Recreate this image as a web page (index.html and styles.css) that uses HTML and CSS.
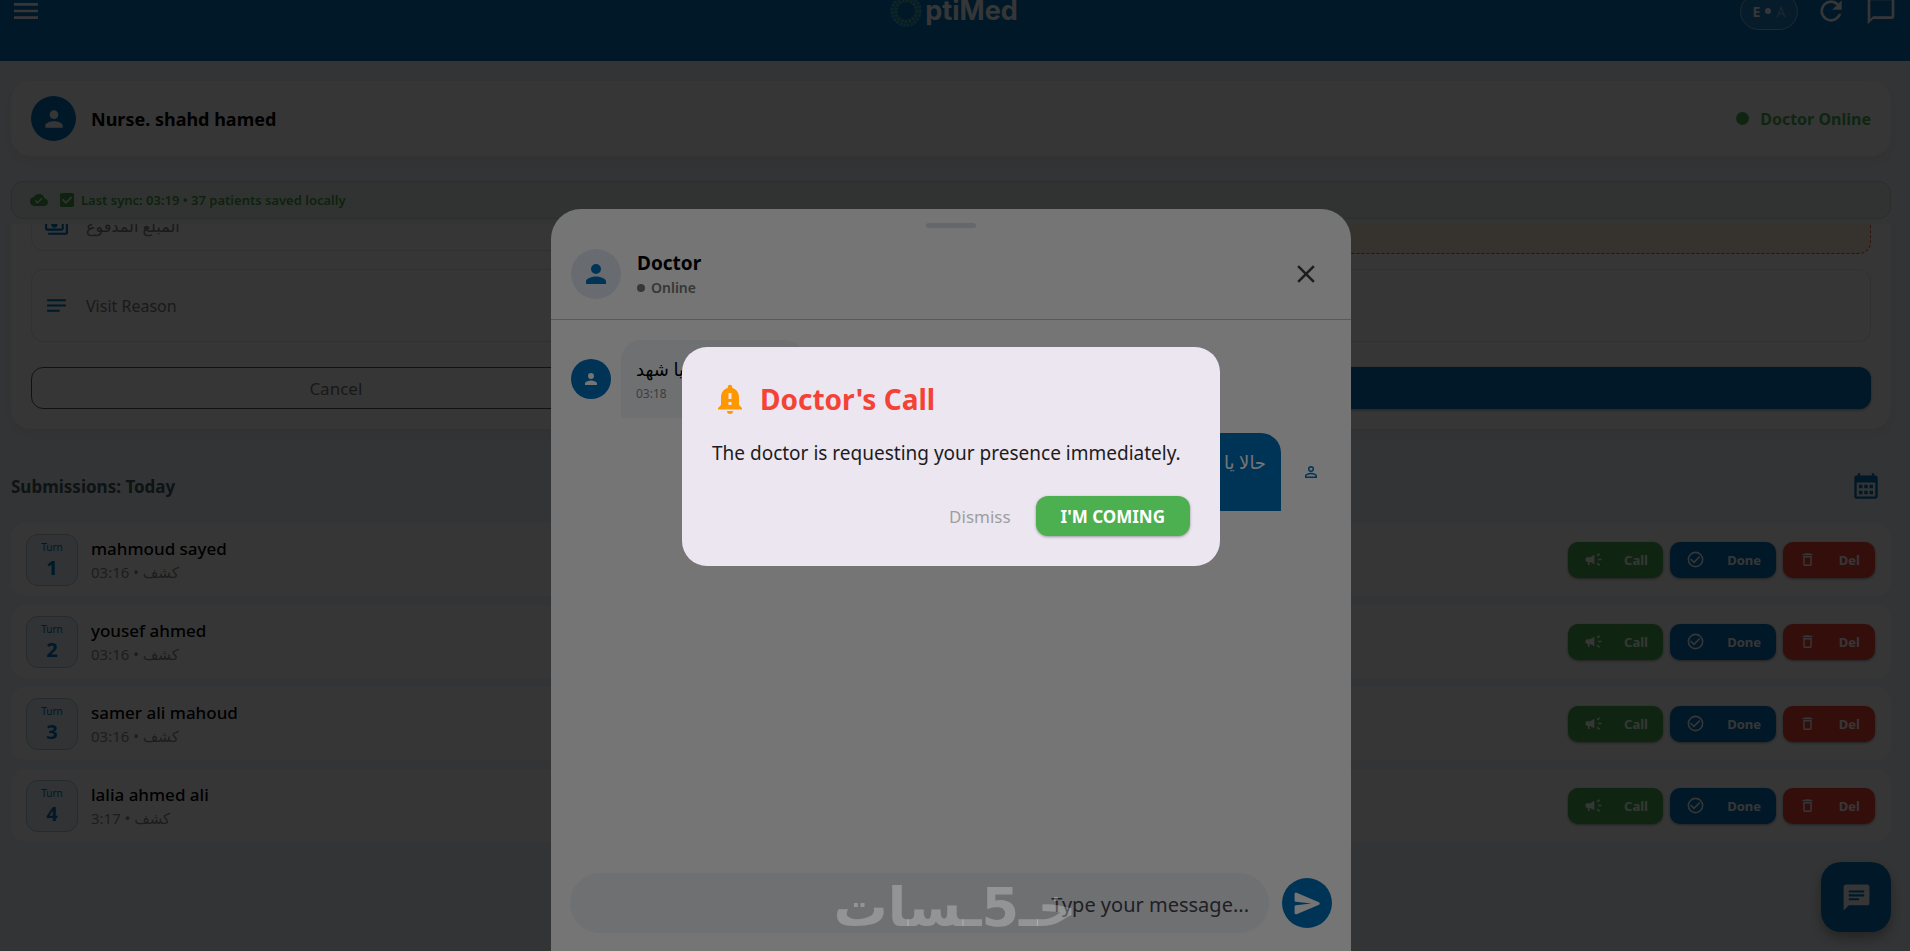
FILE: index.html
```html
<!DOCTYPE html>
<html lang="en">
<head>
    <meta charset="UTF-8">
    <meta name="viewport" content="width=device-width, initial-scale=1.0">
    <title>OptiMed</title>
    <link rel="stylesheet" href="styles.css">
</head>
<body>
    <!-- Icon set -->
    <svg class="sprite" aria-hidden="true">
        <symbol id="i-menu" viewBox="0 0 24 24"><path d="M3 18h18v-2H3v2zm0-5h18v-2H3v2zm0-7v2h18V6H3z"/></symbol>
        <symbol id="i-refresh" viewBox="0 0 24 24"><path d="M17.65 6.35A7.96 7.96 0 0 0 12 4a8 8 0 1 0 7.73 10h-2.08A6 6 0 1 1 12 6c1.66 0 3.14.69 4.22 1.78L13 11h7V4l-2.35 2.35z"/></symbol>
        <symbol id="i-bubble" viewBox="0 0 24 24"><path d="M20 2H4a2 2 0 0 0-2 2v18l4-4h14a2 2 0 0 0 2-2V4a2 2 0 0 0-2-2zm0 14H6l-2 2V4h16v12z"/></symbol>
        <symbol id="i-person" viewBox="0 0 24 24"><path d="M12 12a4 4 0 1 0 0-8 4 4 0 0 0 0 8zm0 2c-2.67 0-8 1.34-8 4v2h16v-2c0-2.66-5.33-4-8-4z"/></symbol>
        <symbol id="i-person-outline" viewBox="0 0 24 24"><path d="M12 5.9a2.1 2.1 0 1 1 0 4.2 2.1 2.1 0 0 1 0-4.2m0 9c2.97 0 6.1 1.46 6.1 2.1v1.1H5.9V17c0-.64 3.13-2.1 6.1-2.1M12 4a4 4 0 1 0 0 8 4 4 0 0 0 0-8zm0 9c-2.67 0-8 1.34-8 4v3h16v-3c0-2.66-5.33-4-8-4z"/></symbol>
        <symbol id="i-cloud" viewBox="0 0 24 24"><path d="M19.35 10.04A7.49 7.49 0 0 0 12 4C9.11 4 6.6 5.64 5.35 8.04A5.994 5.994 0 0 0 0 14c0 3.31 2.69 6 6 6h13c2.76 0 5-2.24 5-5 0-2.64-2.05-4.78-4.65-4.96zM10 17l-3.5-3.5 1.41-1.41L10 14.17l5.18-5.17 1.41 1.41L10 17z"/></symbol>
        <symbol id="i-check" viewBox="0 0 24 24"><path d="M3 0h18a3 3 0 0 1 3 3v18a3 3 0 0 1-3 3H3a3 3 0 0 1-3-3V3a3 3 0 0 1 3-3zm7 19L21 8l-2.200-2.200L10 14.600l-4.800-4.800L3 12l7 7z"/></symbol>
        <symbol id="i-payments" viewBox="0 0 24 24"><path d="M19 14V6a2 2 0 0 0-2-2H3a2 2 0 0 0-2 2v8c0 1.1.9 2 2 2h14a2 2 0 0 0 2-2zm-2 0H3V6h14v8zm-7-7a3 3 0 1 0 0 6 3 3 0 0 0 0-6zm13 0v11a2 2 0 0 1-2 2H4v-2h17V7h2z"/></symbol>
        <symbol id="i-notes" viewBox="0 0 24 24"><path d="M3 18h12v-2H3v2zM3 6v2h18V6H3zm0 7h18v-2H3v2z"/></symbol>
        <symbol id="i-calendar" viewBox="0 0 24 24"><path d="M20 3h-1V1h-2v2H7V1H5v2H4a2 2 0 0 0-2 2v16c0 1.100.9 2 2 2h16a2 2 0 0 0 2-2V5a2 2 0 0 0-2-2zm0 18H4V9h16v12z"/><path d="M6 11h3v3H6zM10.500 11h3v3h-3zM15 11h3v3h-3zM6 16h3v3H6zM10.500 16h3v3h-3zM15 16h3v3h-3z"/></symbol>
        <symbol id="i-campaign" viewBox="0 0 24 24"><path d="M18 11v2h4v-2h-4zM16 17.610c.96.71 2.210 1.650 3.200 2.390.4-.53.8-1.070 1.200-1.600-.99-.74-2.240-1.680-3.200-2.400-.4.540-.8 1.080-1.200 1.610zM20.400 5.600C20 5.070 19.600 4.530 19.200 4c-.99.740-2.240 1.680-3.200 2.400.4.530.8 1.070 1.200 1.600.96-.72 2.210-1.650 3.200-2.400zM4 9a2 2 0 0 0-2 2v2c0 1.100.9 2 2 2h1v4h2v-4h1l5 3V6L8 9H4z"/></symbol>
        <symbol id="i-done" viewBox="0 0 24 24"><path d="M16.590 7.580 10 14.170l-3.590-3.580L5 12l5 5 8-8-1.410-1.420zM12 2a10 10 0 1 0 0 20 10 10 0 0 0 0-20zm0 18a8 8 0 1 1 0-16 8 8 0 0 1 0 16z"/></symbol>
        <symbol id="i-delete" viewBox="0 0 24 24"><path d="M6 19c0 1.100.9 2 2 2h8a2 2 0 0 0 2-2V7H6v12zM8 9h8v10H8V9zm7.500-5-1-1h-5l-1 1H5v2h14V4h-3.500z"/></symbol>
        <symbol id="i-chat" viewBox="0 0 24 24"><path d="M20 2H4a2 2 0 0 0-2 2v18l4-4h14a2 2 0 0 0 2-2V4a2 2 0 0 0-2-2zM6 6.500h12v1.700H6V6.500zm0 3h12v1.700H6V9.500zm8 4.700H6v-1.700h8v1.700z"/></symbol>
        <symbol id="i-close" viewBox="0 0 24 24"><path d="M19 6.410 17.590 5 12 10.590 6.410 5 5 6.410 10.590 12 5 17.590 6.410 19 12 13.410 17.590 19 19 17.590 13.410 12z"/></symbol>
        <symbol id="i-send" viewBox="0 0 24 24"><path d="M3.600 20.300 20.900 12.900a1 1 0 0 0 0-1.800L3.600 3.700A1 1 0 0 0 2 4.600v5c0 .5.400.9.900 1L15 12 2.900 13.400c-.5.100-.9.500-.9 1v5c0 .7.900 1.200 1.600.9z"/></symbol>
        <symbol id="i-alert" viewBox="0 0 24 24"><path d="M18 16v-5c0-3.070-1.640-5.640-4.500-6.320V4a1.500 1.500 0 0 0-3 0v.68C7.630 5.360 6 7.920 6 11v5l-2 2v1h16v-1l-2-2zm-5 0h-2v-2h2v2zm0-4h-2V8h2v4zm-1 10a2 2 0 0 0 2-2h-4a2 2 0 0 0 2 2z"/></symbol>
    </svg>

    <header class="topbar">
        <button class="icon-btn" aria-label="Menu"><svg><use href="#i-menu"/></svg></button>
        <div class="brand">
            <svg class="brand-ring" viewBox="0 0 36 36">
                <circle cx="18" cy="18" r="13" fill="none" stroke="#1f86b8" stroke-width="8"/>
                <circle cx="18" cy="18" r="15" fill="none" stroke="#37b0d8" stroke-width="3" stroke-dasharray="2 2"/>
                <circle cx="18" cy="18" r="11" fill="none" stroke="#5db58c" stroke-width="3" stroke-dasharray="2 2"/>
            </svg>
            <span>ptiMed</span>
        </div>
        <div class="topbar-actions">
            <button class="lang">E <i></i> <span>A</span></button>
            <button class="icon-btn" aria-label="Refresh"><svg><use href="#i-refresh"/></svg></button>
            <button class="icon-btn" aria-label="Messages"><svg><use href="#i-bubble"/></svg></button>
        </div>
    </header>

    <main class="page">
        <section class="user-card">
            <div class="avatar"><svg><use href="#i-person"/></svg></div>
            <h1>Nurse. shahd hamed</h1>
            <div class="status"><i></i>Doctor Online</div>
        </section>

        <div class="sync">
            <svg class="cloud"><use href="#i-cloud"/></svg>
            <svg class="tick"><use href="#i-check"/></svg>
            <span>Last sync: 03:19 • 37 patients saved locally</span>
        </div>

        <div class="scroll">
            <form class="visit-form">
                <div class="row">
                    <label class="field"><svg><use href="#i-payments"/></svg><input type="text" placeholder="المبلغ المدفوع"></label>
                    <div class="notice"></div>
                </div>
                <label class="field tall"><svg><use href="#i-notes"/></svg><input type="text" placeholder="Visit Reason"></label>
                <div class="form-actions">
                    <button type="button" class="cancel">Cancel</button>
                    <button type="button" class="submit" aria-label="Submit"></button>
                </div>
            </form>

            <div class="list-head">
                <h2>Submissions: Today</h2>
                <button class="icon-btn" aria-label="Pick date"><svg><use href="#i-calendar"/></svg></button>
            </div>

            <ul class="list">
                <li>
                    <div class="turn"><small>Turn</small><b>1</b></div>
                    <div class="who"><strong>mahmoud sayed</strong><span>03:16 • كشف</span></div>
                    <button class="act call"><svg><use href="#i-campaign"/></svg>Call</button>
                    <button class="act done"><svg><use href="#i-done"/></svg>Done</button>
                    <button class="act del"><svg><use href="#i-delete"/></svg>Del</button>
                </li>
                <li>
                    <div class="turn"><small>Turn</small><b>2</b></div>
                    <div class="who"><strong>yousef ahmed</strong><span>03:16 • كشف</span></div>
                    <button class="act call"><svg><use href="#i-campaign"/></svg>Call</button>
                    <button class="act done"><svg><use href="#i-done"/></svg>Done</button>
                    <button class="act del"><svg><use href="#i-delete"/></svg>Del</button>
                </li>
                <li>
                    <div class="turn"><small>Turn</small><b>3</b></div>
                    <div class="who"><strong>samer ali mahoud</strong><span>03:16 • كشف</span></div>
                    <button class="act call"><svg><use href="#i-campaign"/></svg>Call</button>
                    <button class="act done"><svg><use href="#i-done"/></svg>Done</button>
                    <button class="act del"><svg><use href="#i-delete"/></svg>Del</button>
                </li>
                <li>
                    <div class="turn"><small>Turn</small><b>4</b></div>
                    <div class="who"><strong>lalia ahmed ali</strong><span>3:17 • كشف</span></div>
                    <button class="act call"><svg><use href="#i-campaign"/></svg>Call</button>
                    <button class="act done"><svg><use href="#i-done"/></svg>Done</button>
                    <button class="act del"><svg><use href="#i-delete"/></svg>Del</button>
                </li>
            </ul>
        </div>
    </main>

    <button class="fab" aria-label="Open chat"><svg><use href="#i-chat"/></svg></button>

    <!-- Chat sheet -->
    <div class="overlay bottom">
        <section class="chat">
            <div class="handle"></div>
            <header class="chat-head">
                <div class="avatar light"><svg><use href="#i-person"/></svg></div>
                <div class="chat-title">
                    <h2>Doctor</h2>
                    <p><i></i>Online</p>
                </div>
                <button class="icon-btn close" aria-label="Close"><svg><use href="#i-close"/></svg></button>
            </header>
            <div class="messages">
                <div class="msg">
                    <div class="avatar small"><svg><use href="#i-person"/></svg></div>
                    <div class="bubble"><p dir="rtl">يا شهد</p><time>03:18</time></div>
                </div>
                <div class="msg mine">
                    <div class="bubble" dir="rtl"><p>حالا يا</p></div>
                    <div class="avatar small clear"><svg><use href="#i-person-outline"/></svg></div>
                </div>
            </div>
            <form class="composer">
                <input type="text" placeholder="Type your message..." aria-label="Message">
                <button type="button" class="send" aria-label="Send"><svg><use href="#i-send"/></svg></button>
            </form>
        </section>
    </div>

    <!-- Call alert -->
    <div class="overlay middle">
        <section class="dialog" role="alertdialog" aria-labelledby="call-title">
            <h2 id="call-title"><svg><use href="#i-alert"/></svg>Doctor's Call</h2>
            <p>The doctor is requesting your presence immediately.</p>
            <div class="dialog-actions">
                <button class="dismiss">Dismiss</button>
                <button class="coming">I'M COMING</button>
            </div>
        </section>
    </div>

    <div class="watermark" dir="rtl">خـ5ـسات</div>
</body>
</html>
```

FILE: styles.css
```css
* {
    box-sizing: border-box;
}
html, body {
    height: 100%;
}
body {
    margin: 0;
    overflow: hidden;
    display: flex;
    flex-direction: column;
    background: #f0f4f8;
    color: #000;
    font-family: "Noto Sans", "DejaVu Sans", sans-serif;
    font-size: 16px;
}
h1, h2, p, ul {
    margin: 0;
    padding: 0;
}
button, input {
    font-family: inherit;
    border: none;
    background: none;
    padding: 0;
    margin: 0;
}
svg {
    fill: currentColor;
    flex: none;
}
.sprite {
    position: absolute;
    width: 0;
    height: 0;
}
.icon-btn {
    display: flex;
    align-items: center;
    justify-content: center;
    width: 50px;
    height: 50px;
    color: inherit;
}
.icon-btn svg {
    width: 32px;
    height: 32px;
}

/* top bar, partly scrolled out of view */
.topbar {
    flex: none;
    height: 85px;
    margin-top: -24px;
    padding: 0 4px 15px 1px;
    display: grid;
    grid-template-columns: 1fr auto 1fr;
    align-items: center;
    background: #0071bb;
    color: #fff;
}
.brand {
    display: flex;
    align-items: center;
    gap: 2px;
    font-family: Inter, sans-serif;
    font-size: 27px;
    font-weight: 700;
    line-height: 32px;
}
.brand-ring {
    width: 34px;
    height: 34px;
}
.topbar-actions {
    display: flex;
    align-items: center;
    justify-content: flex-end;
}
.lang {
    display: flex;
    align-items: center;
    justify-content: center;
    gap: 5px;
    width: 58px;
    height: 37px;
    margin-right: 8px;
    border: 1px solid #8fbfe0;
    border-radius: 19px;
    background: #2584c4;
    color: #fff;
    font-size: 14px;
    font-weight: 700;
}
.lang i {
    width: 6px;
    height: 6px;
    border-radius: 50%;
    background: #fff;
}
.lang span {
    color: #7fb4da;
    font-weight: 400;
}

.page {
    flex: 1;
    min-height: 0;
    display: flex;
    flex-direction: column;
    padding: 20px 19px 0 11px;
}
.avatar {
    display: flex;
    align-items: center;
    justify-content: center;
    flex: none;
    width: 45px;
    height: 45px;
    border-radius: 50%;
    background: #0071bb;
    color: #fff;
}
.avatar svg {
    width: 26px;
    height: 26px;
}
.user-card {
    display: flex;
    align-items: center;
    height: 75px;
    padding: 0 20px;
    gap: 15px;
    flex: none;
    border-radius: 20px;
    background: #fff;
    box-shadow: 0 5px 12px rgba(0, 0, 0, 0.05);
}
.user-card h1 {
    flex: 1;
    font-size: 18px;
    font-weight: 700;
}
.status {
    display: flex;
    align-items: center;
    gap: 11px;
    color: #4caf50;
    font-size: 16px;
    font-weight: 700;
}
.status i {
    width: 13px;
    height: 13px;
    border-radius: 50%;
    background: #4caf50;
}
.sync {
    display: flex;
    align-items: center;
    flex: none;
    height: 38px;
    margin: 25px 0 5px;
    padding: 0 18px;
    border: 1px solid #c5dec6;
    border-radius: 12px;
    background: #e8f2e9;
    color: #43a047;
    font-size: 13px;
    font-weight: 600;
}
.sync .cloud {
    width: 18px;
    height: 18px;
    margin-right: 12px;
}
.sync .tick {
    width: 14px;
    height: 14px;
    margin-right: 7px;
}

/* scroll area bleeds sideways so that card shadows stay visible */
.scroll {
    flex: 1;
    min-height: 0;
    overflow: hidden;
    margin: 0 -19px 0 -11px;
    padding: 0 19px 0 11px;
}
.visit-form {
    display: flex;
    flex-direction: column;
    gap: 15px;
    margin-top: -46px;
    padding: 20px;
    border-radius: 20px;
    background: #fff;
    box-shadow: 0 5px 12px rgba(0, 0, 0, 0.05);
}
.row {
    display: flex;
    align-items: center;
    gap: 15px;
}
.row .field {
    flex: 1;
}
.notice {
    flex: 1;
    height: 56px;
    border: 1px dashed #e0503c;
    border-radius: 12px;
    background: #fff0dc;
}
.field {
    display: flex;
    align-items: center;
    gap: 17px;
    height: 50px;
    padding: 0 12px;
    border: 1px solid #e6e6e6;
    border-radius: 12px;
    background: #fcfcfc;
    color: #0071bb;
}
.field.tall {
    height: 73px;
}
.field svg {
    width: 25px;
    height: 25px;
}
.field input {
    flex: 1;
    font-size: 16px;
    outline: none;
}
.field input::placeholder {
    color: #7a7a7a;
    opacity: 1;
}
.form-actions {
    display: flex;
    gap: 15px;
    margin-top: 10px;
}
.form-actions button {
    height: 42px;
    border-radius: 12px;
    font-size: 17px;
}
.form-actions .cancel {
    flex: 1;
    border: 1px solid #555;
    color: #757575;
}
.form-actions .submit {
    flex: 2;
    background: #0071bb;
    box-shadow: 0 1px 3px rgba(0, 0, 0, 0.4);
}

.list-head {
    display: flex;
    align-items: center;
    justify-content: space-between;
    height: 50px;
    margin: 32px 0 12px;
    color: #455a64;
}
.list-head h2 {
    font-size: 17px;
    font-weight: 700;
}
.list-head .icon-btn {
    color: #0071bb;
}
.list-head svg {
    width: 28px;
    height: 28px;
}
.list {
    display: flex;
    flex-direction: column;
    gap: 9px;
    list-style: none;
}
.list li {
    display: flex;
    align-items: center;
    gap: 7px;
    height: 73px;
    padding: 0 16px 0 15px;
    border-radius: 15px;
    background: #fff;
}
.turn {
    display: flex;
    flex-direction: column;
    align-items: center;
    width: 52px;
    height: 52px;
    padding-top: 5px;
    border: 1px solid #b5c9d9;
    border-radius: 12px;
    background: #e6f0f8;
    color: #0071bb;
}
.turn small {
    font-size: 10px;
    line-height: 14px;
}
.turn b {
    font-size: 20px;
    line-height: 28px;
}
.who {
    flex: 1;
    display: flex;
    flex-direction: column;
    padding-left: 6px;
}
.who strong {
    font-size: 17px;
    font-weight: 500;
    line-height: 24px;
}
.who span {
    color: #8a8a8a;
    font-size: 15px;
    line-height: 22px;
}
.act {
    display: flex;
    align-items: center;
    justify-content: space-between;
    width: 95px;
    height: 36px;
    padding: 0 15px 0 16px;
    border-radius: 10px;
    color: #fff;
    font-size: 13px;
    font-weight: 700;
    box-shadow: 0 1px 3px rgba(0, 0, 0, 0.4);
}
.act svg {
    width: 19px;
    height: 19px;
}
.call {
    background: #4caf50;
}
.done {
    width: 106px;
    background: #0071bb;
}
.del {
    width: 92px;
    background: #f44336;
}
.act.del svg {
    width: 17px;
    height: 17px;
}
.fab {
    position: fixed;
    right: 19px;
    bottom: 19px;
    display: flex;
    align-items: center;
    justify-content: center;
    width: 70px;
    height: 70px;
    border-radius: 20px;
    background: #0071bb;
    color: #fff;
    box-shadow: 0 6px 12px rgba(0, 0, 0, 0.3);
}
.fab svg {
    width: 31px;
    height: 31px;
}

.overlay {
    position: fixed;
    inset: 0;
    display: flex;
    justify-content: center;
    background: rgba(0, 0, 0, 0.54);
}
.overlay.bottom {
    align-items: flex-end;
    padding-right: 8px;
}
.overlay.middle {
    align-items: center;
    padding: 0 8px 38px 0;
}

.chat {
    display: flex;
    flex-direction: column;
    width: 100%;
    max-width: 800px;
    height: 78%;
    border-radius: 30px 30px 0 0;
    background: #fff;
}
.handle {
    align-self: center;
    width: 50px;
    height: 5px;
    margin-top: 14px;
    border-radius: 3px;
    background: #dce2e8;
}
.chat-head {
    display: flex;
    align-items: center;
    gap: 16px;
    height: 92px;
    padding: 0 20px;
    border-bottom: 1px solid #bec3ca;
}
.avatar.light {
    width: 50px;
    height: 50px;
    background: #e3eaf2;
    color: #0071bb;
}
.avatar.light svg {
    width: 30px;
    height: 30px;
}
.chat-title {
    flex: 1;
    padding-top: 2px;
}
.chat-title h2 {
    font-size: 19px;
    line-height: 26px;
}
.chat-title p {
    display: flex;
    align-items: center;
    gap: 6px;
    color: #757a75;
    font-size: 14px;
    font-weight: 600;
    line-height: 24px;
}
.chat-title i {
    width: 8px;
    height: 8px;
    border-radius: 50%;
    background: #757a75;
}
.close {
    color: #3c4043;
}
.close svg {
    width: 30px;
    height: 30px;
}
.messages {
    flex: 1;
    display: flex;
    flex-direction: column;
    gap: 15px;
    padding: 20px;
}
.msg {
    display: flex;
    align-items: center;
    gap: 10px;
}
.msg.mine {
    justify-content: flex-end;
}
.avatar.small {
    width: 40px;
    height: 40px;
}
.avatar.small svg {
    width: 18px;
    height: 18px;
}
.avatar.clear {
    background: none;
    color: #0071bb;
}
.bubble {
    display: flex;
    flex-direction: column;
    align-items: flex-start;
    width: 184px;
    height: 78px;
    padding: 15px;
    border-radius: 20px 20px 20px 0;
    background: #f0f4f8;
    font-size: 18px;
    line-height: 28px;
}
.bubble time {
    color: #858585;
    font-size: 12px;
    line-height: 22px;
}
.mine .bubble {
    width: 160px;
    border-radius: 20px 20px 0 20px;
    background: #0071bb;
    color: #fff;
}
.composer {
    display: flex;
    align-items: center;
    gap: 13px;
    padding: 0 19px 18px;
}
.composer input {
    flex: 1;
    min-width: 0;
    height: 60px;
    padding: 3px 20px 0;
    border-radius: 30px;
    background: #f0f4f8;
    font-size: 20px;
    text-align: right;
    outline: none;
}
.composer input::placeholder {
    color: #49454f;
    opacity: 1;
}
.send {
    display: flex;
    align-items: center;
    justify-content: center;
    width: 50px;
    height: 50px;
    border-radius: 50%;
    background: #0071bb;
    color: #fff;
}
.send svg {
    width: 31px;
    height: 31px;
}

.dialog {
    width: 100%;
    max-width: 538px;
    padding: 30px;
    border-radius: 25px;
    background: #ece6f0;
}
.dialog h2 {
    display: flex;
    align-items: center;
    gap: 12px;
    color: #f44336;
    font-size: 28px;
    line-height: 44px;
}
.dialog h2 svg {
    width: 36px;
    height: 36px;
    color: #ff9800;
}
.dialog p {
    margin-top: 18px;
    color: #1d1b20;
    font-size: 19px;
    line-height: 28px;
}
.dialog-actions {
    display: flex;
    align-items: center;
    justify-content: flex-end;
    gap: 25px;
    margin-top: 29px;
}
.dismiss {
    color: #9e9e9e;
    font-size: 17px;
}
.coming {
    height: 40px;
    padding: 0 25px;
    border-radius: 12px;
    background: #4caf50;
    color: #fff;
    font-size: 17px;
    font-weight: 700;
    box-shadow: 0 1px 3px rgba(0, 0, 0, 0.35);
}

.watermark {
    position: fixed;
    left: 0;
    right: 0;
    bottom: 8px;
    text-align: center;
    color: rgba(255, 255, 255, 0.25);
    font-family: "DejaVu Sans", sans-serif;
    font-size: 54px;
    font-weight: 700;
    line-height: 70px;
    pointer-events: none;
}
```
